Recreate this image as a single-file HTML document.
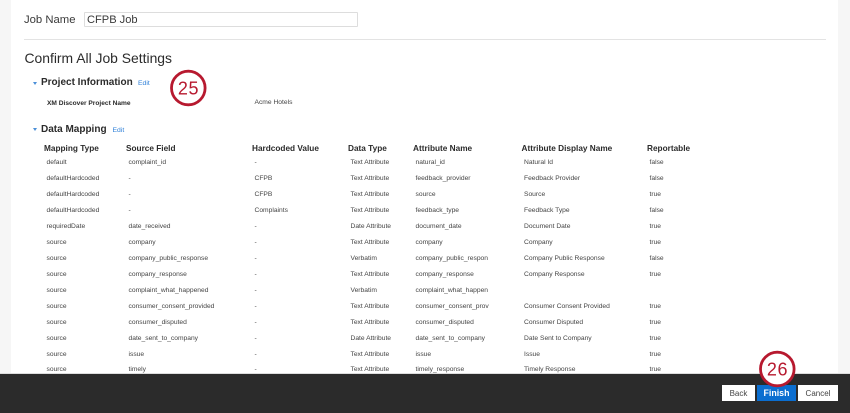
<!DOCTYPE html>
<html><head><meta charset="utf-8"><style>
html,body{margin:0;padding:0;background:#f6f6f6}
#p{position:relative;width:850px;height:413px;overflow:hidden;font-family:"Liberation Sans",sans-serif;background:#f6f6f6}
#c{position:absolute;left:11px;top:0;width:827px;height:413px;background:#fff}
#b{position:absolute;left:0;top:0;width:850px;height:413px;filter:blur(.35px)}
.t{position:absolute;white-space:nowrap;color:#444;font-size:6.7px;line-height:10px}
.h{position:absolute;white-space:nowrap;color:#2b2b2b;font-size:8.25px;font-weight:bold;line-height:12px;top:142.5px}
.s{position:absolute;white-space:nowrap;color:#2b2b2b;font-size:10px;font-weight:bold;line-height:14px}
.e{position:absolute;white-space:nowrap;color:#2f80d8;font-size:6.8px;line-height:10px}
.a{position:absolute;left:33px;width:0;height:0;border-left:2.5px solid transparent;border-right:2.5px solid transparent;border-top:3px solid #4a8fd8}
.r{position:absolute;left:0;width:850px;height:10px}
.r span{position:absolute;top:0;white-space:nowrap;color:#444;font-size:6.7px;line-height:10px}
.c1{left:46.5px}.c2{left:128.5px}.c3{left:254.5px}.c4{left:350.5px}.c5{left:415.5px}.c6{left:524px}.c7{left:649.5px}
#f{position:absolute;left:0;top:373px;width:850px;height:40px;background:#2b2b2b;border-top:1px solid #ddd;box-sizing:border-box}
.btn{position:absolute;top:385px;height:16px;line-height:17px;text-align:center;font-size:8px;background:#fff;color:#444}
</style></head><body><div id="p"><div id="c"></div><div id="b">
<div class="t" style="left:24px;top:13px;font-size:11.3px;line-height:15px;color:#3a3a3a">Job Name</div>
<div style="position:absolute;left:84px;top:12px;width:274px;height:15px;box-sizing:border-box;border:1px solid #ddd;border-radius:1px;background:#fff"></div>
<div class="t" style="left:87px;top:12.5px;font-size:11.1px;line-height:15px;color:#3a3a3a">CFPB Job</div>
<div style="position:absolute;left:24px;top:38.5px;width:802px;height:1px;background:#e3e3e3"></div>
<div class="t" style="left:24.5px;top:49.5px;font-size:13.9px;line-height:17px;color:#2b2b2b">Confirm All Job Settings</div>

<div class="a" style="top:81.5px"></div>
<div class="s" style="left:41px;top:76px">Project Information</div>
<div class="e" style="left:138px;top:79px">Edit</div>
<div class="t" style="left:47px;top:99px;font-weight:bold;color:#2b2b2b;font-size:6.6px">XM Discover Project Name</div>
<div class="t" style="left:254.5px;top:98px">Acme Hotels</div>

<div class="a" style="top:128px"></div>
<div class="s" style="left:41px;top:123px">Data Mapping</div>
<div class="e" style="left:112.5px;top:125.5px">Edit</div>

<div class="h" style="left:44px">Mapping Type</div>
<div class="h" style="left:126px">Source Field</div>
<div class="h" style="left:252px">Hardcoded Value</div>
<div class="h" style="left:348px">Data Type</div>
<div class="h" style="left:413px">Attribute Name</div>
<div class="h" style="left:521.5px">Attribute Display Name</div>
<div class="h" style="left:647px">Reportable</div>

<div class="r" style="top:157.5px"><span class="c1">default</span><span class="c2">complaint_id</span><span class="c3">-</span><span class="c4">Text Attribute</span><span class="c5">natural_id</span><span class="c6">Natural Id</span><span class="c7">false</span></div>
<div class="r" style="top:173.5px"><span class="c1">defaultHardcoded</span><span class="c2">-</span><span class="c3">CFPB</span><span class="c4">Text Attribute</span><span class="c5">feedback_provider</span><span class="c6">Feedback Provider</span><span class="c7">false</span></div>
<div class="r" style="top:189.5px"><span class="c1">defaultHardcoded</span><span class="c2">-</span><span class="c3">CFPB</span><span class="c4">Text Attribute</span><span class="c5">source</span><span class="c6">Source</span><span class="c7">true</span></div>
<div class="r" style="top:205.5px"><span class="c1">defaultHardcoded</span><span class="c2">-</span><span class="c3">Complaints</span><span class="c4">Text Attribute</span><span class="c5">feedback_type</span><span class="c6">Feedback Type</span><span class="c7">false</span></div>
<div class="r" style="top:221.5px"><span class="c1">requiredDate</span><span class="c2">date_received</span><span class="c3">-</span><span class="c4">Date Attribute</span><span class="c5">document_date</span><span class="c6">Document Date</span><span class="c7">true</span></div>
<div class="r" style="top:237.5px"><span class="c1">source</span><span class="c2">company</span><span class="c3">-</span><span class="c4">Text Attribute</span><span class="c5">company</span><span class="c6">Company</span><span class="c7">true</span></div>
<div class="r" style="top:253.5px"><span class="c1">source</span><span class="c2">company_public_response</span><span class="c3">-</span><span class="c4">Verbatim</span><span class="c5">company_public_respon</span><span class="c6">Company Public Response</span><span class="c7">false</span></div>
<div class="r" style="top:269.5px"><span class="c1">source</span><span class="c2">company_response</span><span class="c3">-</span><span class="c4">Text Attribute</span><span class="c5">company_response</span><span class="c6">Company Response</span><span class="c7">true</span></div>
<div class="r" style="top:285.5px"><span class="c1">source</span><span class="c2">complaint_what_happened</span><span class="c3">-</span><span class="c4">Verbatim</span><span class="c5">complaint_what_happen</span></div>
<div class="r" style="top:302px"><span class="c1">source</span><span class="c2">consumer_consent_provided</span><span class="c3">-</span><span class="c4">Text Attribute</span><span class="c5">consumer_consent_prov</span><span class="c6">Consumer Consent Provided</span><span class="c7">true</span></div>
<div class="r" style="top:318px"><span class="c1">source</span><span class="c2">consumer_disputed</span><span class="c3">-</span><span class="c4">Text Attribute</span><span class="c5">consumer_disputed</span><span class="c6">Consumer Disputed</span><span class="c7">true</span></div>
<div class="r" style="top:334px"><span class="c1">source</span><span class="c2">date_sent_to_company</span><span class="c3">-</span><span class="c4">Date Attribute</span><span class="c5">date_sent_to_company</span><span class="c6">Date Sent to Company</span><span class="c7">true</span></div>
<div class="r" style="top:349.5px"><span class="c1">source</span><span class="c2">issue</span><span class="c3">-</span><span class="c4">Text Attribute</span><span class="c5">issue</span><span class="c6">Issue</span><span class="c7">true</span></div>
<div class="r" style="top:365px"><span class="c1">source</span><span class="c2">timely</span><span class="c3">-</span><span class="c4">Text Attribute</span><span class="c5">timely_response</span><span class="c6">Timely Response</span><span class="c7">true</span></div>

<div id="f"></div>
<div class="btn" style="left:722px;width:33px">Back</div>
<div class="btn" style="left:757px;width:39px;background:#0b6ed0;color:#fff;font-size:8.8px;font-weight:bold">Finish</div>
<div class="btn" style="left:798px;width:40px">Cancel</div>

<svg style="position:absolute;left:0;top:0" width="850" height="413">
<circle cx="188.3" cy="88" r="16.8" fill="#fff" stroke="#b7192f" stroke-width="2.8"/>
<text x="188.5" y="94.3" font-family="Liberation Sans, sans-serif" font-size="18" letter-spacing=".6" fill="#b7192f" text-anchor="middle">25</text>
<circle cx="777.3" cy="369" r="16.8" fill="#fff" stroke="#b7192f" stroke-width="2.8"/>
<text x="777.5" y="375.3" font-family="Liberation Sans, sans-serif" font-size="18" letter-spacing=".6" fill="#b7192f" text-anchor="middle">26</text>
</svg>
</div></div></body></html>
